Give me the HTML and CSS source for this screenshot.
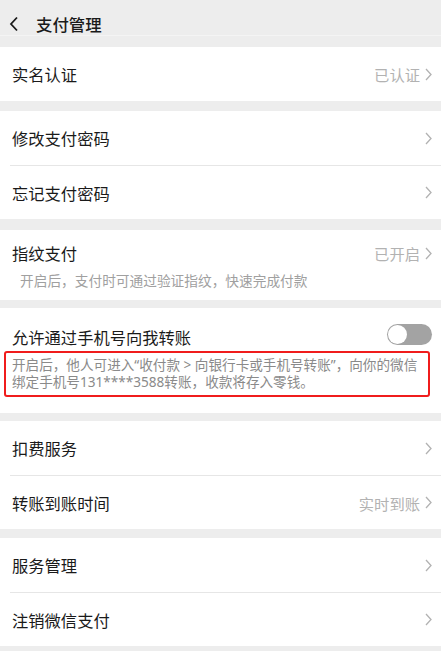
FILE: index.html
```html
<!DOCTYPE html>
<html lang="zh-CN">
<head>
    <meta charset="UTF-8">
    <meta name="viewport" content="width=device-width, initial-scale=1.0">
    <title>支付管理</title>
    <link rel="stylesheet" href="styles.css">
</head>
<body>
    <header class="top-bar">
        <svg class="back" width="10" height="16" viewBox="0 0 10 16">
            <polyline points="8,1.5 2,8 8,14.5" fill="none" stroke="#1a1a1a" stroke-width="1.8"/>
        </svg>
        <h1>支付管理</h1>
    </header>

    <section class="group gap-11">
        <div class="row">
            <span class="label">实名认证</span>
            <span class="value">已认证</span>
            <svg class="arrow" width="7" height="13" viewBox="0 0 7 13"><polyline points="1,1 6,6.5 1,12" fill="none" stroke="#b2b2b2" stroke-width="1.3"/></svg>
        </div>
    </section>

    <section class="group gap-10">
        <div class="row">
            <span class="label">修改支付密码</span>
            <svg class="arrow" width="7" height="13" viewBox="0 0 7 13"><polyline points="1,1 6,6.5 1,12" fill="none" stroke="#b2b2b2" stroke-width="1.3"/></svg>
        </div>
        <div class="row">
            <span class="label">忘记支付密码</span>
            <svg class="arrow" width="7" height="13" viewBox="0 0 7 13"><polyline points="1,1 6,6.5 1,12" fill="none" stroke="#b2b2b2" stroke-width="1.3"/></svg>
        </div>
    </section>

    <section class="group gap-11 block fingerprint">
        <div class="line">
            <span class="label">指纹支付</span>
            <span class="value">已开启</span>
            <svg class="arrow" width="7" height="13" viewBox="0 0 7 13"><polyline points="1,1 6,6.5 1,12" fill="none" stroke="#b2b2b2" stroke-width="1.3"/></svg>
        </div>
        <p class="sub">开启后，支付时可通过验证指纹，快速完成付款</p>
    </section>

    <section class="group gap-8 block phone">
        <div class="line">
            <span class="label">允许通过手机号向我转账</span>
            <span class="switch"><span class="knob"></span></span>
        </div>
        <p class="desc">开启后，他人可进入“收付款 &gt; 向银行卡或手机号转账”，向你的微信绑定手机号131****3588转账，收款将存入零钱。</p>
    </section>

    <section class="group gap-8">
        <div class="row">
            <span class="label">扣费服务</span>
            <svg class="arrow" width="7" height="13" viewBox="0 0 7 13"><polyline points="1,1 6,6.5 1,12" fill="none" stroke="#b2b2b2" stroke-width="1.3"/></svg>
        </div>
        <div class="row">
            <span class="label">转账到账时间</span>
            <span class="value">实时到账</span>
            <svg class="arrow" width="7" height="13" viewBox="0 0 7 13"><polyline points="1,1 6,6.5 1,12" fill="none" stroke="#b2b2b2" stroke-width="1.3"/></svg>
        </div>
    </section>

    <section class="group gap-9">
        <div class="row">
            <span class="label">服务管理</span>
            <svg class="arrow" width="7" height="13" viewBox="0 0 7 13"><polyline points="1,1 6,6.5 1,12" fill="none" stroke="#b2b2b2" stroke-width="1.3"/></svg>
        </div>
        <div class="row">
            <span class="label">注销微信支付</span>
            <svg class="arrow" width="7" height="13" viewBox="0 0 7 13"><polyline points="1,1 6,6.5 1,12" fill="none" stroke="#b2b2b2" stroke-width="1.3"/></svg>
        </div>
    </section>
</body>
</html>
```

FILE: styles.css
```css
body {
    margin: 0;
    background-color: #ededed;
    font-family: "Noto Sans CJK SC", "Noto Sans", sans-serif;
    color: #1a1a1a;
}

.top-bar {
    height: 23px;
    display: flex;
    align-items: center;
    padding: 12px 0 0 9px;
    border-bottom: 1px solid #f4f4f4;
}

.top-bar .back {
    margin-right: 17px;
}

.top-bar h1 {
    margin: 0;
    font-size: 16.4px;
    font-weight: 500;
    line-height: 22px;
}

.group {
    background-color: #fff;
}

.gap-8 { margin-top: 8px; }
.gap-9 { margin-top: 9px; }
.gap-10 { margin-top: 10px; }
.gap-11 { margin-top: 11px; }

.row {
    height: 54px;
    display: flex;
    align-items: center;
    padding: 0 9px 0 12px;
}

.row + .row {
    border-top: 1px solid #e6e6e6;
    margin-left: 10px;
    padding-left: 2px;
    height: 53px;
}

.label {
    flex: 1;
    font-size: 16.3px;
    line-height: 22px;
}

.value {
    font-size: 15.3px;
    color: #b2b2b2;
    margin-right: 5px;
}

.arrow {
    display: block;
}

.block {
    padding: 0 9px 0 12px;
}

.line {
    display: flex;
    align-items: center;
}

.fingerprint {
    padding-top: 12px;
    padding-bottom: 11px;
}

.sub {
    margin: 7px 0 0 8px;
    font-size: 13.7px;
    line-height: 18px;
    color: #a0a0a0;
}

.phone {
    padding-top: 18px;
    padding-bottom: 16px;
    padding-right: 9px;
    padding-left: 4px;
}

.phone .line {
    padding-left: 8px;
}

.switch {
    width: 45px;
    height: 21px;
    border-radius: 11px;
    background-color: #a3a3a3;
    display: flex;
    align-items: center;
    margin-top: -5px;
}

.knob {
    width: 19px;
    height: 19px;
    margin-left: 1px;
    border-radius: 50%;
    background-color: #fff;
}

.desc {
    margin: 3px 2px 0 0;
    padding: 4px 6px 5px 6px;
    border: 2px solid #f01c1c;
    border-radius: 3px;
    font-family: "Noto Sans", "Noto Sans CJK SC", sans-serif;
    font-size: 13.6px;
    line-height: 16.7px;
    color: #8a8a8a;
}
```
